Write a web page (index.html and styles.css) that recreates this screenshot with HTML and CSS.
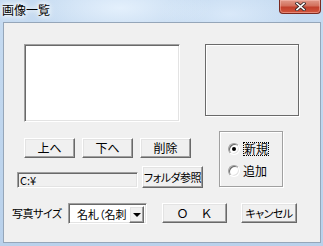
FILE: index.html
```html
<!DOCTYPE html>
<html lang="ja">
<head>
	<meta charset="UTF-8">
	<meta name="viewport" content="width=device-width, initial-scale=1.0">
	<link rel="stylesheet" href="styles.css">
	<title>画像一覧</title>
</head>
<body>
	<div class="window">
		<div class="titlebar">
			<span class="title">画像一覧</span>
			<button class="close" aria-label="閉じる">
				<svg width="11" height="9" viewBox="0 0 11 9">
					<path d="M2 1.5 L9 7.5 M9 1.5 L2 7.5" stroke="#3a2a2a" stroke-width="3.4" stroke-linecap="square"/>
					<path d="M2 1.5 L9 7.5 M9 1.5 L2 7.5" stroke="#fff" stroke-width="1.6" stroke-linecap="square"/>
				</svg>
			</button>
		</div>

		<div class="client">
			<div class="top">
				<div class="listbox"></div>
				<div class="photo"></div>
			</div>

			<div class="mid">
				<div class="tools">
					<div class="btn-row">
						<button class="btn btn-s">上へ</button>
						<button class="btn btn-s">下へ</button>
						<button class="btn btn-s">削除</button>
					</div>
					<div class="path-row">
						<div class="field">C:¥</div>
						<button class="btn btn-browse narrow">フォルダ参照</button>
					</div>
				</div>

				<div class="group" role="radiogroup">
					<label class="radio">
						<span class="dot checked"></span>
						<span class="focus">新規</span>
					</label>
					<label class="radio">
						<span class="dot"></span>
						<span>追加</span>
					</label>
				</div>
			</div>

			<div class="bottom">
				<span class="lbl narrow">写真サイズ</span>
				<div class="combo">
					<span class="combo-text">名札（名刺</span>
					<span class="drop"></span>
				</div>
				<button class="btn btn-ok">Ｏ　Ｋ</button>
				<button class="btn btn-cancel narrow">キャンセル</button>
			</div>
		</div>
	</div>
</body>
</html>
```

FILE: styles.css
```css
* {
  box-sizing: border-box;
  margin: 0;
  padding: 0;
}
html, body {
  width: 323px;
  height: 246px;
  overflow: hidden;
}
body {
  font: 12px/1 "Noto Sans CJK JP", "Noto Sans", sans-serif;
  font-feature-settings: "palt";
  color: #000;
}
button {
  font: inherit;
  color: inherit;
  background: none;
  border: none;
}
.narrow {
  font-size: 11px;
  letter-spacing: -0.5px;
  white-space: nowrap;
}

/* window frame */
.window {
  display: flex;
  flex-direction: column;
  width: 323px;
  height: 246px;
  padding: 0 2px 3px 3px;
  background:
    radial-gradient(ellipse 90px 30px at 120px 8px, rgba(235, 245, 255, .8), transparent),
    radial-gradient(ellipse 70px 26px at 230px 14px, rgba(230, 242, 255, .6), transparent),
    linear-gradient(#c6dbf1, #b9d1eb);
}
.titlebar {
  display: flex;
  justify-content: space-between;
  align-items: flex-start;
  height: 22px;
  margin-left: -1px;
}
.title {
  padding-top: 4px;
  font-size: 12px;
  font-feature-settings: normal;
  text-shadow: 0 0 4px #fff, 0 0 6px #fff, 0 0 8px #fff;
}
.close {
  display: flex;
  align-items: center;
  justify-content: center;
  width: 42px;
  height: 14px;
  border: 1px solid #7a2a20;
  border-top: none;
  border-radius: 0 0 4px 4px;
  background: linear-gradient(#e19a8a, #d2705c 45%, #c1402c 55%, #d2553c);
  box-shadow: inset 0 0 0 1px rgba(255, 200, 190, .45);
}

/* client area */
.client {
  flex: 1;
  border: 1px solid #95a6b9;
  background: #f0f0f0;
  padding-top: 21px;
}
.top {
  display: flex;
  align-items: flex-start;
  padding-left: 20px;
}
.listbox {
  width: 156px;
  height: 78px;
  background: #fff;
  border: 1px solid;
  border-color: #a0a0a0 #fff #fff #a0a0a0;
  box-shadow: inset 1px 1px #696969, inset -1px -1px #e3e3e3;
}
.photo {
  width: 94px;
  height: 72px;
  margin-left: 25px;
  border: 1px solid #6a6a6a;
  box-shadow: 1px 1px #fff, inset 1px 1px #fff;
}

.mid {
  display: flex;
  align-items: flex-start;
  margin-top: 9px;
  padding-left: 13px;
}
.tools {
  padding-top: 7px;
}
.btn-row {
  display: flex;
  gap: 7px;
  padding-left: 7px;
}
.btn {
  display: flex;
  align-items: center;
  justify-content: center;
  height: 20px;
  white-space: nowrap;
  background: #f0f0f0;
  border: 1px solid;
  border-color: #fff #696969 #696969 #fff;
  box-shadow: inset -1px -1px #a0a0a0, inset 1px 1px #e3e3e3;
}
.btn-s {
  width: 51px;
}
.path-row {
  display: flex;
  align-items: flex-end;
  margin-top: 8px;
}
.field {
  width: 121px;
  height: 16px;
  padding: 2px 0 0 2px;
  font-size: 11px;
  background: #f0f0f0;
  border: 1px solid;
  border-color: #a0a0a0 #fff #fff #a0a0a0;
  box-shadow: inset 1px 1px #696969, inset -1px -1px #e3e3e3;
}
.btn-browse {
  width: 61px;
  height: 22px;
  margin-left: 4px;
}

/* radio group */
.group {
  display: flex;
  flex-direction: column;
  gap: 6px;
  width: 64px;
  height: 56px;
  margin-left: 16px;
  padding: 9px 0 0 8px;
  border: 1px solid #a0a0a0;
  box-shadow: inset 1px 1px #fff, 1px 1px #fff;
}
.radio {
  display: flex;
  align-items: center;
  gap: 3px;
  height: 16px;
}
.dot {
  display: flex;
  align-items: center;
  justify-content: center;
  width: 12px;
  height: 12px;
  border-radius: 50%;
  background: #fff;
  border: 1px solid;
  border-color: #a0a0a0 #fff #fff #a0a0a0;
  box-shadow: inset 1px 1px #696969, inset -1px -1px #e3e3e3;
}
.dot.checked::after {
  width: 4px;
  height: 4px;
  border-radius: 50%;
  background: #000;
  content: '';
}
.focus {
  padding: 1px;
  outline: 1px dotted #000;
  outline-offset: -1px;
}

/* bottom row */
.bottom {
  display: flex;
  align-items: flex-start;
  margin-top: 15px;
  padding-left: 8px;
}
.lbl {
  width: 56px;
  padding-top: 5px;
}
.combo {
  display: flex;
  width: 79px;
  height: 21px;
  background: #fff;
  border: 1px solid;
  border-color: #a0a0a0 #fff #fff #a0a0a0;
  box-shadow: inset 1px 1px #696969, inset -1px -1px #e3e3e3;
  padding: 2px;
}
.combo-text {
  flex: 1;
  overflow: hidden;
  white-space: nowrap;
  padding: 3px 0 0 6px;
  font-size: 11px;
}
.drop {
  display: flex;
  align-items: center;
  justify-content: center;
  width: 15px;
  height: 17px;
  background: #f0f0f0;
  border: 1px solid;
  border-color: #fff #696969 #696969 #fff;
  box-shadow: inset -1px -1px #a0a0a0, inset 1px 1px #e3e3e3;
}
.drop::after {
  border: 4px solid transparent;
  border-top-color: #000;
  border-bottom-width: 0;
  margin-top: 1px;
  content: '';
}
.btn-ok {
  width: 65px;
  margin-left: 15px;
  font-feature-settings: normal;
}
.btn-cancel {
  width: 56px;
  margin-left: 14px;
}
```
